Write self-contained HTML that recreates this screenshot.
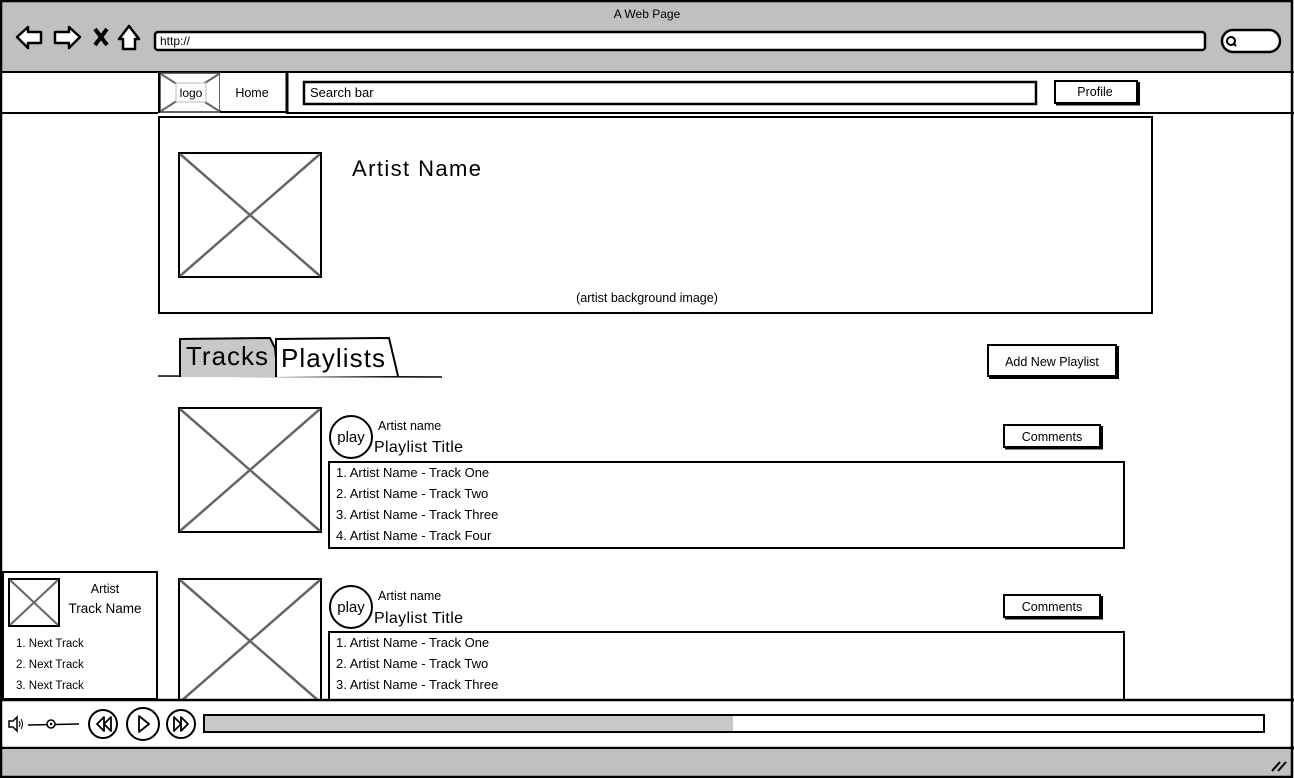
<!DOCTYPE html>
<html><head><meta charset="utf-8"><style>
html,body{margin:0;padding:0;background:#fff;}
svg{display:block;}
text{font-family:"Liberation Sans",sans-serif;fill:#000;}
</style></head><body>
<svg width="1294" height="778" viewBox="0 0 1294 778" xmlns="http://www.w3.org/2000/svg">
<defs>
<filter id="sh"><feDropShadow dx="2" dy="2" stdDeviation="0" flood-color="#000"/></filter>
</defs>
<rect x="0" y="0" width="1294" height="778" fill="#fff"/>
<rect x="1" y="1" width="1291" height="71" fill="#c0c0c0"/>
<line x1="0" y1="72" x2="1294" y2="72" stroke="#000" stroke-width="2"/>
<text x="647" y="18" font-size="12" text-anchor="middle">A Web Page</text>
<path d="M17 37 L28 27 L28 32 L41 32 L41 43 L28 43 L28 48 Z" fill="#fff" stroke="#000" stroke-width="2.5" stroke-linejoin="round"/>
<path d="M80 37 L69 27 L69 32 L55 32 L55 43 L69 43 L69 48 Z" fill="#fff" stroke="#000" stroke-width="2.5" stroke-linejoin="round"/>
<path d="M95 29 L107 45 M107 29 L95 45" stroke="#000" stroke-width="4"/>
<path d="M119 39 L129 26 L139 39 L135 39 L135 49 L123 49 L123 39 Z" fill="#fff" stroke="#000" stroke-width="2.5" stroke-linejoin="round"/>
<rect x="155" y="32" width="1050" height="18" rx="3" fill="#fff" stroke="#000" stroke-width="2.5"/>
<text x="160" y="45" font-size="12">http://</text>
<rect x="1222" y="30" width="58" height="22" rx="11" fill="#fff" stroke="#000" stroke-width="2.5"/>
<circle cx="1231" cy="41" r="4" fill="none" stroke="#000" stroke-width="2"/>
<line x1="1233" y1="43" x2="1236" y2="46" stroke="#000" stroke-width="2"/>
<line x1="0" y1="113" x2="158" y2="113" stroke="#000" stroke-width="2"/>
<line x1="286" y1="113" x2="1294" y2="113" stroke="#000" stroke-width="2"/>
<rect x="160" y="73" width="60" height="39" fill="#fff" stroke="#333" stroke-width="1.5"/>
<path d="M161 74 L219 111 M219 74 L161 111" stroke="#666" stroke-width="2"/>
<rect x="176" y="83" width="30" height="19" fill="#fff" stroke="#bbb" stroke-width="1"/>
<text x="191" y="97" font-size="12" text-anchor="middle">logo</text>
<line x1="159" y1="73" x2="159" y2="113" stroke="#000" stroke-width="2"/>
<rect x="220" y="73" width="66" height="37" fill="#fff"/>
<text x="252" y="97" font-size="12.5" text-anchor="middle">Home</text>
<line x1="287" y1="73" x2="287" y2="112" stroke="#000" stroke-width="3"/>
<line x1="220" y1="112" x2="286" y2="112" stroke="#000" stroke-width="2"/>
<rect x="304" y="82" width="732" height="22" fill="#fff" stroke="#000" stroke-width="2.5"/>
<text x="310" y="97" font-size="13">Search bar</text>
<rect x="1055" y="81" width="82" height="22" fill="#fff" stroke="#000" stroke-width="2" filter="url(#sh)"/>
<text x="1095" y="96" font-size="12.5" text-anchor="middle">Profile</text>
<rect x="159" y="117" width="993" height="196" fill="#fff" stroke="#000" stroke-width="2"/>
<rect x="179" y="153" width="142" height="124" fill="#fff" stroke="#000" stroke-width="2"/>
<path d="M180 154 L320 276 M320 154 L180 276" stroke="#666" stroke-width="2.5"/>
<text x="352" y="176" font-size="22" textLength="129">Artist Name</text>
<text x="647" y="302" font-size="12.5" text-anchor="middle">(artist background image)</text>
<path d="M158 376 L442 377" stroke="#000" stroke-width="1.5"/>
<path d="M180 377 L180 339 L270 338 L275 348 L278 377" fill="#c8c8c8" stroke="#000" stroke-width="2"/>
<path d="M276 377 L276 339 L389 338 L398 376" fill="#fff" stroke="#000" stroke-width="2"/>
<text x="186" y="365" font-size="26" textLength="82">Tracks</text>
<text x="281" y="367" font-size="26" textLength="104">Playlists</text>
<rect x="988" y="345" width="128" height="31" fill="#fff" stroke="#000" stroke-width="2" filter="url(#sh)"/>
<text x="1052" y="366" font-size="12.5" text-anchor="middle">Add New Playlist</text>
<rect x="179" y="408" width="142" height="124" fill="#fff" stroke="#000" stroke-width="2"/>
<path d="M180 409 L320 531 M320 409 L180 531" stroke="#666" stroke-width="2.5"/>
<circle cx="351" cy="437" r="21" fill="#fff" stroke="#000" stroke-width="2"/>
<text x="351" y="442" font-size="15" text-anchor="middle">play</text>
<text x="378" y="430" font-size="12.5">Artist name</text>
<text x="374" y="452" font-size="16" textLength="89">Playlist Title</text>
<rect x="1004" y="425" width="96" height="22" fill="#fff" stroke="#000" stroke-width="2" filter="url(#sh)"/>
<text x="1052" y="441" font-size="12.5" text-anchor="middle">Comments</text>
<rect x="329" y="462" width="795" height="86" fill="#fff" stroke="#000" stroke-width="2"/>
<text x="336" y="477" font-size="13">1. Artist Name - Track One</text>
<text x="336" y="498" font-size="13">2. Artist Name - Track Two</text>
<text x="336" y="519" font-size="13">3. Artist Name - Track Three</text>
<text x="336" y="540" font-size="13">4. Artist Name - Track Four</text>
<rect x="179" y="579" width="142" height="130" fill="#fff" stroke="#000" stroke-width="2"/>
<path d="M180 580 L320 702 M320 580 L180 702" stroke="#666" stroke-width="2.5"/>
<circle cx="351" cy="607" r="21" fill="#fff" stroke="#000" stroke-width="2"/>
<text x="351" y="612" font-size="15" text-anchor="middle">play</text>
<text x="378" y="600" font-size="12.5">Artist name</text>
<text x="374" y="623" font-size="16" textLength="89">Playlist Title</text>
<rect x="1004" y="595" width="96" height="22" fill="#fff" stroke="#000" stroke-width="2" filter="url(#sh)"/>
<text x="1052" y="611" font-size="12.5" text-anchor="middle">Comments</text>
<rect x="329" y="632" width="795" height="70" fill="#fff" stroke="#000" stroke-width="2"/>
<text x="336" y="647" font-size="13">1. Artist Name - Track One</text>
<text x="336" y="668" font-size="13">2. Artist Name - Track Two</text>
<text x="336" y="689" font-size="13">3. Artist Name - Track Three</text>
<rect x="3" y="572" width="154" height="127" fill="#fff" stroke="#000" stroke-width="2"/>
<rect x="9" y="579" width="50" height="47" fill="#fff" stroke="#000" stroke-width="2"/>
<path d="M10 580 L58 625 M58 580 L10 625" stroke="#666" stroke-width="2"/>
<text x="105" y="593" font-size="12.5" text-anchor="middle">Artist</text>
<text x="105" y="613" font-size="13.5" text-anchor="middle">Track Name</text>
<text x="16" y="647" font-size="11.5">1. Next Track</text>
<text x="16" y="668" font-size="11.5">2. Next Track</text>
<text x="16" y="689" font-size="11.5">3. Next Track</text>
<rect x="1" y="700" width="1291" height="48" fill="#fff"/>
<line x1="0" y1="700" x2="1294" y2="700" stroke="#000" stroke-width="2.5"/>
<line x1="0" y1="748" x2="1294" y2="748" stroke="#000" stroke-width="2.5"/>
<path d="M9 721 L13 721 L17 717 L17 731 L13 727 L9 727 Z" fill="#fff" stroke="#000" stroke-width="1.5"/>
<path d="M19 721 Q21 724 19 727 M21 719 Q24 724 21 729" fill="none" stroke="#000" stroke-width="1"/>
<line x1="28" y1="725" x2="79" y2="724" stroke="#000" stroke-width="1.5"/>
<circle cx="51" cy="724" r="4" fill="#fff" stroke="#000" stroke-width="1.5"/>
<circle cx="51" cy="724" r="1.2" fill="#000"/>
<circle cx="103" cy="724" r="14" fill="#fff" stroke="#000" stroke-width="2"/>
<path d="M104 717 L97 724 L104 731 Z M111 717 L104 724 L111 731 Z" fill="none" stroke="#000" stroke-width="1.8" stroke-linejoin="round"/>
<circle cx="143" cy="724" r="16" fill="#fff" stroke="#000" stroke-width="2"/>
<path d="M139 716 L149 724 L139 732 Z" fill="none" stroke="#000" stroke-width="1.8" stroke-linejoin="round"/>
<circle cx="181" cy="724" r="14" fill="#fff" stroke="#000" stroke-width="2"/>
<path d="M174 717 L181 724 L174 731 Z M181 717 L188 724 L181 731 Z" fill="none" stroke="#000" stroke-width="1.8" stroke-linejoin="round"/>
<rect x="204" y="715" width="1060" height="17" fill="#fff" stroke="#000" stroke-width="2"/>
<rect x="205" y="716" width="528" height="15" fill="#c8c8c8"/>
<rect x="1" y="749" width="1291" height="27" fill="#c0c0c0"/>
<path d="M1272 771 L1280 762 M1278 771 L1286 762" stroke="#000" stroke-width="2"/>
<rect x="1" y="1" width="1291" height="776" fill="none" stroke="#000" stroke-width="2.5"/>
</svg>
</body></html>
